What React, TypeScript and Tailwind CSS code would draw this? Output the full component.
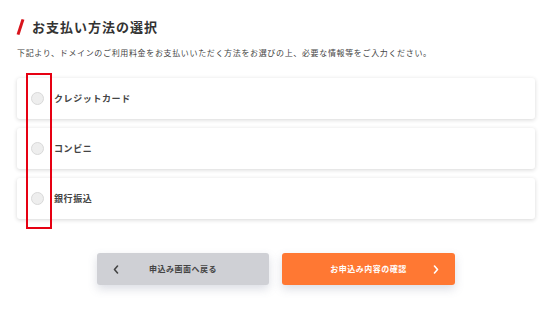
import React from "react";

const font = { fontFamily: '"Noto Sans CJK JP", "Noto Sans", sans-serif' };

function Radio() {
  return <span className="block w-[13px] h-[13px] rounded-full bg-[#eeeeee] border border-[#d9d9d9] shrink-0" />;
}

function Card({ label }: { label: string }) {
  return (
    <div className="h-[41px] bg-white rounded-[3px] shadow-[0_1px_4px_rgba(0,0,0,0.16)] flex items-center pl-[14px] gap-[10px]">
      <Radio />
      <span className="text-[9px] font-bold tracking-[0.6px] text-[#444]">{label}</span>
    </div>
  );
}

function Chevron({ dir, color }: { dir: "left" | "right"; color: string }) {
  return (
    <svg width="6" height="9" viewBox="0 0 6 9" fill="none">
      <path
        d={dir === "left" ? "M4.5 1L1.5 4.5L4.5 8" : "M1.5 1L4.5 4.5L1.5 8"}
        stroke={color}
        strokeWidth="1.6"
        strokeLinecap="round"
        strokeLinejoin="round"
      />
    </svg>
  );
}

export default function App() {
  return (
    <div className="relative w-[550px] h-[319px] bg-white overflow-hidden" style={font}>
      <div className="pl-[17px] pr-[15px] pt-[19px]">
        <div className="flex items-center h-[16px]">
          <span className="block w-[3px] h-[16px] bg-[#d8141c] rotate-[18deg] ml-[2px]" />
          <h1 className="ml-[10px] text-[13px] font-bold tracking-[1px] leading-[16px] text-[#333]">お支払い方法の選択</h1>
        </div>
        <p className="mt-[12px] text-[8px] leading-[12px] tracking-[0.65px] text-[#444]">
          下記より、ドメインのご利用料金をお支払いいただく方法をお選びの上、必要な情報等をご入力ください。
        </p>
        <div className="mt-[19px] flex flex-col gap-[9px]">
          <Card label="クレジットカード" />
          <Card label="コンビニ" />
          <Card label="銀行振込" />
        </div>
        <div className="mt-[34px] flex justify-center gap-[13px]">
          <button className="relative w-[172px] h-[32px] rounded-[3px] bg-[#cfd0d5] shadow-[0_4px_10px_rgba(90,100,130,0.22)] flex items-center justify-center">
            <span className="absolute left-[16px] top-[12px] flex"><Chevron dir="left" color="#444" /></span>
            <span className="text-[8px] font-bold tracking-[0.5px] text-[#444]">申込み画面へ戻る</span>
          </button>
          <button className="relative w-[173px] h-[32px] rounded-[3px] bg-[#ff7833] shadow-[0_4px_10px_rgba(90,100,130,0.22)] flex items-center justify-center">
            <span className="text-[8px] font-bold tracking-[0.5px] text-white">お申込み内容の確認</span>
            <span className="absolute right-[16px] top-[12px] flex"><Chevron dir="right" color="#ffffff" /></span>
          </button>
        </div>
      </div>
      <div className="absolute left-[26px] top-[73px] w-[26px] h-[156px] border-2 border-[#e60012]" />
    </div>
  );
}
